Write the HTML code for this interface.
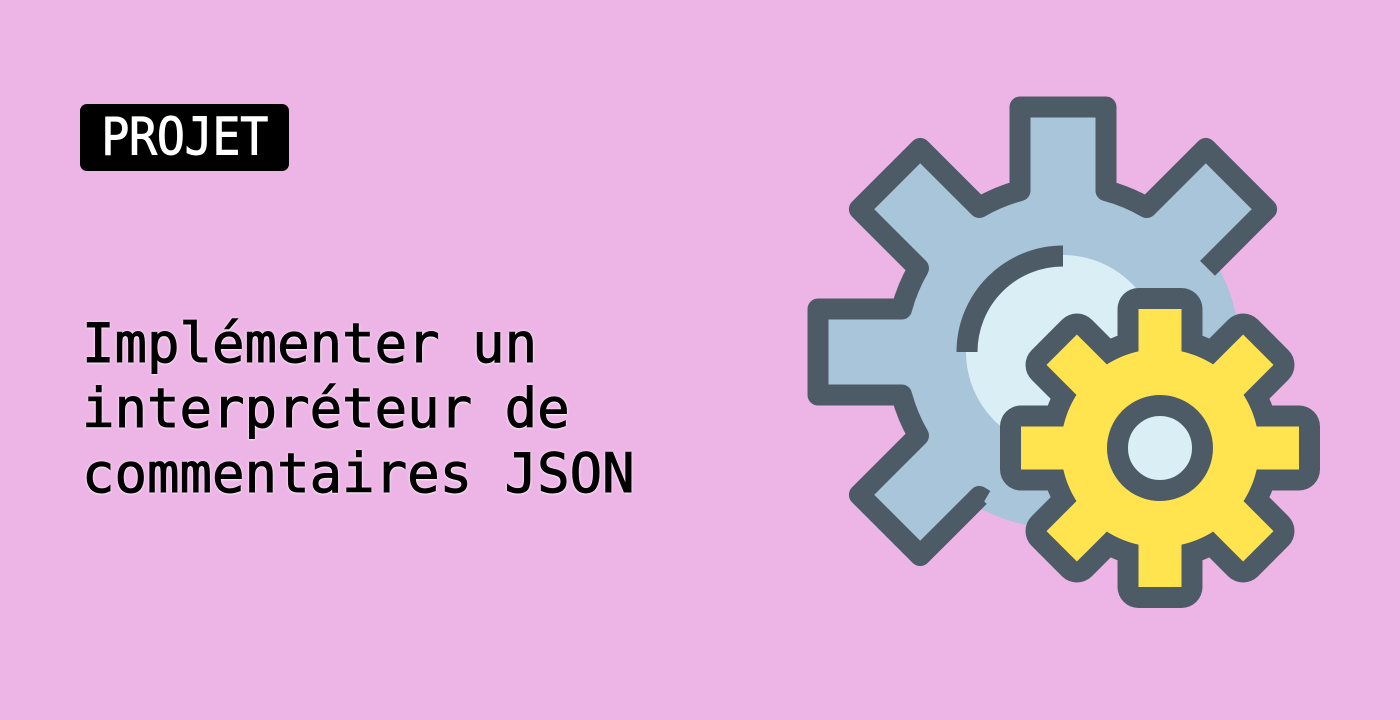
<!DOCTYPE html>
<html><head><meta charset="utf-8"><style>
html,body{margin:0;padding:0}
body{width:1400px;height:720px;background:#EDB5E6;position:relative;overflow:hidden;font-family:"DejaVu Sans Mono","Liberation Mono",monospace}
.badge{position:absolute;left:80px;top:104px;width:209px;height:67px;background:#000;border-radius:7px;color:#fff;font-size:47px;line-height:67px;text-align:center;-webkit-text-stroke:0.8px #fff;letter-spacing:-0.5px}
.badge span{display:inline-block;transform:scaleY(1.1)}
.title{position:absolute;left:82px;top:311px;font-size:54px;line-height:65px;color:#000;-webkit-text-stroke:1px #000;text-shadow:0 0 3px #fff,0 1px 2px rgba(255,255,255,.8)}
svg{position:absolute;left:0;top:0}
</style></head><body>
<div class="badge"><span>PROJET</span></div>
<div class="title">Implémenter un<br>interpréteur de<br>commentaires JSON</div>
<svg width="1400" height="720" viewBox="0 0 1400 720">
<g transform="translate(1063,352)">
 <circle r="177" fill="#A9C5D9"/>
 <path fill="#A9C5D9" d="M144.5,-83.7 L203.6,-142.8 L142.8,-203.6 L83.7,-144.5 A167,167 0 0,0 43,-161.4 L43,-245 L-43,-245 L-43,-161.4 A167,167 0 0,0 -83.7,-144.5 L-142.8,-203.6 L-203.6,-142.8 L-144.5,-83.7 A167,167 0 0,0 -161.4,-43 L-245,-43 L-245,43 L-161.4,43 A167,167 0 0,0 -144.5,83.7 L-203.6,142.8 L-142.8,203.6 L-83.7,144.5 A167,167 0 0,0 -72,151 Z"/>
 <path fill="none" stroke="#4D5B66" stroke-width="21" stroke-linejoin="round" d="M144.5,-83.7 L203.6,-142.8 L142.8,-203.6 L83.7,-144.5 A167,167 0 0,0 43,-161.4 L43,-245 L-43,-245 L-43,-161.4 A167,167 0 0,0 -83.7,-144.5 L-142.8,-203.6 L-203.6,-142.8 L-144.5,-83.7 A167,167 0 0,0 -161.4,-43 L-245,-43 L-245,43 L-161.4,43 A167,167 0 0,0 -144.5,83.7 L-203.6,142.8 L-142.8,203.6 L-83.7,144.5 A167,167 0 0,0 -78,148"/>
 <circle r="97" fill="#DAEEF5"/>
 <path d="M0,-96 A96,96 0 0,0 -96,0" stroke="#4D5B66" stroke-width="21" fill="none"/>
</g>
<g transform="translate(1160,448)">
 <g stroke="#4D5B66" stroke-width="42" stroke-linejoin="round" fill="#FFE34F">
  <rect x="-21.5" y="-139" width="43" height="60" transform="rotate(0)"/>
  <rect x="-21.5" y="-139" width="43" height="60" transform="rotate(45)"/>
  <rect x="-21.5" y="-139" width="43" height="60" transform="rotate(90)"/>
  <rect x="-21.5" y="-139" width="43" height="60" transform="rotate(135)"/>
  <rect x="-21.5" y="-139" width="43" height="60" transform="rotate(180)"/>
  <rect x="-21.5" y="-139" width="43" height="60" transform="rotate(225)"/>
  <rect x="-21.5" y="-139" width="43" height="60" transform="rotate(270)"/>
  <rect x="-21.5" y="-139" width="43" height="60" transform="rotate(315)"/>
  <circle r="99"/>
 </g>
 <g fill="#FFE34F">
  <rect x="-21.5" y="-139" width="43" height="60" transform="rotate(0)"/>
  <rect x="-21.5" y="-139" width="43" height="60" transform="rotate(45)"/>
  <rect x="-21.5" y="-139" width="43" height="60" transform="rotate(90)"/>
  <rect x="-21.5" y="-139" width="43" height="60" transform="rotate(135)"/>
  <rect x="-21.5" y="-139" width="43" height="60" transform="rotate(180)"/>
  <rect x="-21.5" y="-139" width="43" height="60" transform="rotate(225)"/>
  <rect x="-21.5" y="-139" width="43" height="60" transform="rotate(270)"/>
  <rect x="-21.5" y="-139" width="43" height="60" transform="rotate(315)"/>
  <circle r="99"/>
 </g>
 <circle r="42.5" fill="#DAEEF5" stroke="#4D5B66" stroke-width="21"/>
</g>
</svg>
</body></html>
